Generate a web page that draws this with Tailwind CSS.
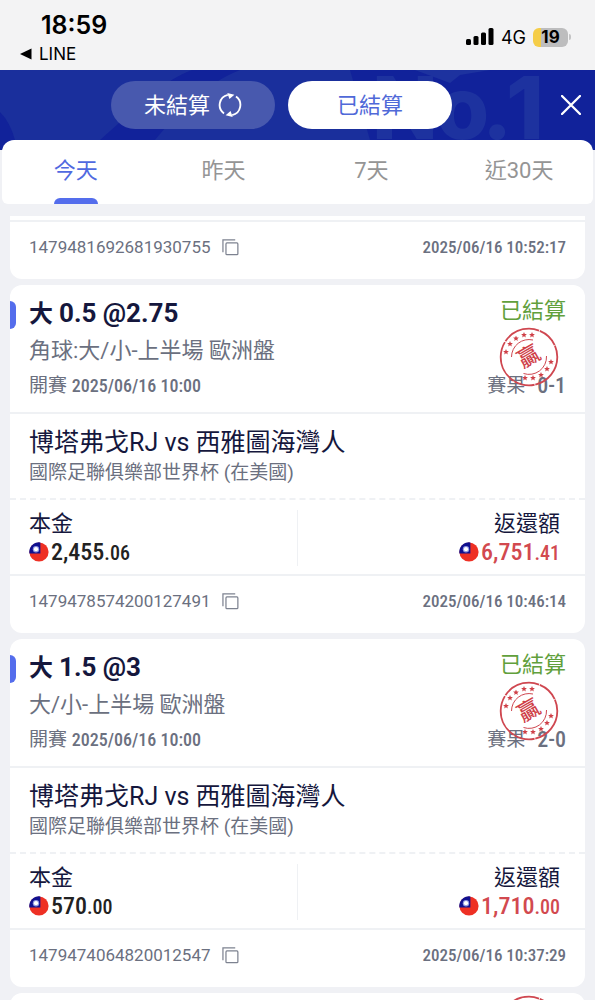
<!DOCTYPE html>
<html lang="zh-Hant">
<head>
  <meta charset="UTF-8" />
  <meta name="viewport" content="width=device-width, initial-scale=1.0" />
  <title>已結算</title>
  <script src="https://cdn.jsdelivr.net/npm/@tailwindcss/browser@4"></script>
</head>
<body class="bg-[#f0f1f5] text-[#6b7080] font-['Roboto','Noto_Sans_CJK_TC',sans-serif]">

  <!-- Iconos compartidos -->
  <svg class="hidden">
    <symbol id="copy" viewBox="0 0 18 18">
      <path d="M1 14V1h13" fill="none" stroke="currentColor" stroke-width="1.3" />
      <rect x="4.2" y="4.2" width="12.6" height="12.4" rx="1" fill="none" stroke="currentColor" stroke-width="1.3" />
    </symbol>
    <symbol id="flag" viewBox="0 0 20 20">
      <circle cx="10" cy="10" r="9.6" fill="#ee3024" />
      <path d="M.4 11.6A9.6 9.6 0 0 1 11.4.5V11.6z" fill="#10108f" />
      <circle cx="7" cy="7.2" r="3.2" fill="#8f95e0" />
      <circle cx="7" cy="7.2" r="2.1" fill="#fff" />
    </symbol>
    <symbol id="star" viewBox="-5 -5 10 10">
      <path d="M0-5 1.4-1.7 4.8-1.5 2.2.7 3 4 0 2.2-3 4-2.2.7-4.8-1.5-1.4-1.7z" fill="#cf4048" />
    </symbol>
    <symbol id="stamp" viewBox="0 0 60 60">
      <g fill="none" stroke="#cf4750">
        <circle cx="30" cy="30" r="28.3" stroke-width="1.8" stroke-dasharray="38 .8 21 .6 44 1" />
        <path d="M12.500 30A17.500 17.500 0 0 1 34 13" stroke-width="1" />
        <path d="M47.500 29A17.500 17.500 0 0 1 24.500 46.500" stroke-width="1" />
      </g>
      <use href="#star" x="4" y="22" width="6" height="6" />
      <use href="#star" x="8" y="14" width="6" height="6" />
      <use href="#star" x="14" y="8.500" width="6" height="6" />
      <use href="#star" x="22" y="5" width="6" height="6" />
      <use href="#star" x="30" y="5" width="6" height="6" />
      <use href="#star" x="49" y="32" width="6" height="6" />
      <use href="#star" x="45" y="39" width="6" height="6" />
      <use href="#star" x="39" y="45" width="6" height="6" />
      <use href="#star" x="31" y="48" width="6" height="6" />
      <use href="#star" x="23" y="48" width="6" height="6" />
      <text x="30" y="37" transform="rotate(-30 30 30)" text-anchor="middle" font-size="22" font-weight="500" fill="#cf4048">贏</text>
    </symbol>
  </svg>

  <div class="h-screen flex flex-col overflow-hidden">

    <!-- Barra de estado -->
    <div class="h-[70px] shrink-0 bg-[#f3f3f4] text-black flex justify-between pl-5 pr-6 font-['Inter',sans-serif]">
      <div class="pt-2">
        <p class="pl-[21px] text-[25px] leading-[34px] font-semibold">18:59</p>
        <a href="#" class="flex items-center gap-[7px] text-[17px] leading-6">
          <svg class="w-3 h-3" viewBox="0 0 12 12"><path d="M0 6 11.500 .5v11z" fill="#000" /></svg>
          LINE
        </a>
      </div>
      <div class="flex items-center h-[74px]">
        <svg class="w-7 h-[18px]" viewBox="0 0 28 18">
          <rect x="0" y="11" width="5" height="6" rx="1.500" />
          <rect x="7.500" y="8" width="5" height="9" rx="1.500" />
          <rect x="15" y="4.500" width="5" height="12.500" rx="1.500" />
          <rect x="22.500" y="0" width="5" height="17" rx="1.500" />
        </svg>
        <span class="ml-[7px] text-[18px]">4G</span>
        <span class="ml-[7px] w-[35px] h-[19px] rounded-md bg-linear-to-r from-[#f5cd48] from-22% to-[#bdbdbe] to-22% text-[17px] leading-[19px] font-bold text-center">19</span>
        <span class="ml-px w-[2px] h-[6px] rounded-r bg-[#c4c4c5]"></span>
      </div>
    </div>

    <!-- Cabecera -->
    <header class="relative h-[70px] shrink-0 bg-[#11229a] flex justify-center gap-[13px] pt-[11px] pr-8">
      <svg class="absolute inset-0 w-full h-[70px]" viewBox="0 0 595 70" preserveAspectRatio="xMaxYMin slice">
        <rect width="595" height="70" fill="#1a2f9c" />
        <path d="M350 0h245v70H370z" fill="#11229a" />
        <path d="M100 70C145 30 165 10 192 0H240C205 14 180 40 155 70z" fill="#11229a" />
        <path d="M0 42Q10 52 15 70H0z" fill="#11229a" />
        <path d="M415 0h75l-30 5-10 8z" fill="#1d329f" />
        <g font-family="Inter, sans-serif" font-weight="800" font-size="86" fill="#1d329f">
          <text x="372" y="69">N</text>
          <text x="436" y="69">o</text>
          <text x="482" y="69">.</text>
          <text x="506" y="69">1</text>
        </g>
      </svg>
      <button class="relative w-[164px] h-12 rounded-full bg-[#4859ae] text-white text-[22px] flex items-center justify-center gap-2">
        未結算
        <svg class="w-6 h-6" viewBox="0 0 22 22">
          <path d="M5.500 18.700A9.500 9.500 0 0 1 9 1.700M16.500 3.300A9.500 9.500 0 0 1 13 20.300" fill="none" stroke="#fff" stroke-width="1.700" />
          <path d="M8.500 0l6.500 1.500-4.500 4zM13.500 22l-6.500-1.500 4.500-4z" fill="#fff" />
        </svg>
      </button>
      <button class="relative w-[164px] h-12 rounded-full bg-white text-[#5069d8] text-[22px]">已結算</button>
      <button class="absolute right-[14px] top-[25px]" aria-label="關閉">
        <svg class="w-5 h-5" viewBox="0 0 20 20"><path d="M1 1l18 18M19 1L1 19" stroke="#fff" stroke-width="2.300" stroke-linecap="round" /></svg>
      </button>
    </header>

    <!-- Pestañas -->
    <div class="shrink-0 bg-linear-to-b from-[#12249b] from-15% to-[#f0f1f5] to-15%">
      <nav class="relative h-16 mx-[2px] rounded-t-xl rounded-b-md bg-white grid grid-cols-4 text-center text-[22px] leading-[62px] text-[#959595]">
        <a href="#" class="relative text-[#5069e0]">今天
          <span class="absolute bottom-0 inset-x-0 mx-auto w-11 h-[6px] rounded-t-md bg-[#546dec]"></span>
        </a>
        <a href="#">昨天</a>
        <a href="#">7天</a>
        <a href="#">近30天</a>
      </nav>
    </div>

    <!-- Lista de apuestas -->
    <main class="flex-1 min-h-0 overflow-hidden mt-3 mx-[10px] flex flex-col gap-[6px]">
      <article class="shrink-0 bg-white rounded-b-xl pt-1">
        <footer class="border-t-2 border-[#eff1f4] px-[19px] pb-[6px] flex justify-between leading-[51px]">
          <div class="flex items-center gap-[11px] text-[17px]">1479481692681930755
            <button aria-label="複製"><svg class="w-[17px] h-[17px] text-[#7d8290]"><use href="#copy" /></svg></button>
          </div>
          <time class="text-[17px] font-medium font-['Roboto_Condensed','Roboto']">2025/06/16 10:52:17</time>
        </footer>
      </article>

      <article class="shrink-0 bg-white rounded-xl">
        <div class="relative flex justify-between px-[19px] pt-3 pb-[11px]">
          <span class="absolute left-0 top-4 w-[6px] h-7 rounded-r-md bg-[#546dec]"></span>
          <div>
            <h2 class="text-[24px] leading-[34px] font-bold text-[#15173d]">大 <span class="text-[26px] leading-none">0.5 @2.75</span></h2>
            <p class="text-[22px] leading-10">角球:大/小-上半場 歐洲盤</p>
            <p class="text-[19px] leading-[30px]">開賽 <time class="text-[18px] leading-none font-medium font-['Roboto_Condensed','Roboto']">2025/06/16 10:00</time></p>
          </div>
          <div class="flex flex-col justify-between items-end">
            <p class="text-[22px] leading-7 text-[#61a03c]">已結算</p>
            <p class="text-[19px] leading-[30px] flex gap-3">賽果 <span class="text-[22px] font-medium font-['Roboto_Condensed','Roboto']">0-1</span></p>
          </div>
          <svg class="absolute right-[26px] top-[42px] w-[60px] h-[60px]"><use href="#stamp" /></svg>
        </div>
        <div class="border-t-2 border-[#eff1f4] px-[19px] py-3">
          <h3 class="text-[25px] leading-[34px] text-[#15173d]">博塔弗戈RJ vs 西雅圖海灣人</h3>
          <p class="text-[19px] leading-[26px]">國際足聯俱樂部世界杯 (在美國)</p>
        </div>
        <div class="border-t-2 border-dashed border-[#eff1f4] px-[19px] pt-[10px] pb-2 grid grid-cols-2 leading-7">
          <div class="border-r border-[#eff1f4]">
            <p class="text-[22px] text-[#15173d]">本金</p>
            <p class="flex items-center gap-[2px] text-[24px] font-medium font-['Roboto_Condensed','Roboto'] text-[#222]">
              <svg class="w-5 h-5"><use href="#flag" /></svg>
              <span>2,455<span class="text-[20px] leading-none">.06</span></span>
            </p>
          </div>
          <div class="flex flex-col items-end pr-[6px]">
            <p class="text-[22px] text-[#15173d]">返還額</p>
            <p class="flex items-center gap-[2px] text-[24px] font-medium font-['Roboto_Condensed','Roboto'] text-[#d2494f]">
              <svg class="w-5 h-5"><use href="#flag" /></svg>
              <span>6,751<span class="text-[20px] leading-none">.41</span></span>
            </p>
          </div>
        </div>
        <footer class="border-t-2 border-[#eff1f4] px-[19px] pb-[6px] flex justify-between leading-[51px]">
          <div class="flex items-center gap-[11px] text-[17px]">1479478574200127491
            <button aria-label="複製"><svg class="w-[17px] h-[17px] text-[#7d8290]"><use href="#copy" /></svg></button>
          </div>
          <time class="text-[17px] font-medium font-['Roboto_Condensed','Roboto']">2025/06/16 10:46:14</time>
        </footer>
      </article>

      <article class="shrink-0 bg-white rounded-xl">
        <div class="relative flex justify-between px-[19px] pt-3 pb-[11px]">
          <span class="absolute left-0 top-4 w-[6px] h-7 rounded-r-md bg-[#546dec]"></span>
          <div>
            <h2 class="text-[24px] leading-[34px] font-bold text-[#15173d]">大 <span class="text-[26px] leading-none">1.5 @3</span></h2>
            <p class="text-[22px] leading-10">大/小-上半場 歐洲盤</p>
            <p class="text-[19px] leading-[30px]">開賽 <time class="text-[18px] leading-none font-medium font-['Roboto_Condensed','Roboto']">2025/06/16 10:00</time></p>
          </div>
          <div class="flex flex-col justify-between items-end">
            <p class="text-[22px] leading-7 text-[#61a03c]">已結算</p>
            <p class="text-[19px] leading-[30px] flex gap-3">賽果 <span class="text-[22px] font-medium font-['Roboto_Condensed','Roboto']">2-0</span></p>
          </div>
          <svg class="absolute right-[26px] top-[42px] w-[60px] h-[60px]"><use href="#stamp" /></svg>
        </div>
        <div class="border-t-2 border-[#eff1f4] px-[19px] py-3">
          <h3 class="text-[25px] leading-[34px] text-[#15173d]">博塔弗戈RJ vs 西雅圖海灣人</h3>
          <p class="text-[19px] leading-[26px]">國際足聯俱樂部世界杯 (在美國)</p>
        </div>
        <div class="border-t-2 border-dashed border-[#eff1f4] px-[19px] pt-[10px] pb-2 grid grid-cols-2 leading-7">
          <div class="border-r border-[#eff1f4]">
            <p class="text-[22px] text-[#15173d]">本金</p>
            <p class="flex items-center gap-[2px] text-[24px] font-medium font-['Roboto_Condensed','Roboto'] text-[#222]">
              <svg class="w-5 h-5"><use href="#flag" /></svg>
              <span>570<span class="text-[20px] leading-none">.00</span></span>
            </p>
          </div>
          <div class="flex flex-col items-end pr-[6px]">
            <p class="text-[22px] text-[#15173d]">返還額</p>
            <p class="flex items-center gap-[2px] text-[24px] font-medium font-['Roboto_Condensed','Roboto'] text-[#d2494f]">
              <svg class="w-5 h-5"><use href="#flag" /></svg>
              <span>1,710<span class="text-[20px] leading-none">.00</span></span>
            </p>
          </div>
        </div>
        <footer class="border-t-2 border-[#eff1f4] px-[19px] pb-[6px] flex justify-between leading-[51px]">
          <div class="flex items-center gap-[11px] text-[17px]">1479474064820012547
            <button aria-label="複製"><svg class="w-[17px] h-[17px] text-[#7d8290]"><use href="#copy" /></svg></button>
          </div>
          <time class="text-[17px] font-medium font-['Roboto_Condensed','Roboto']">2025/06/16 10:37:29</time>
        </footer>
      </article>

      <article class="shrink-0 bg-white rounded-t-xl flex justify-end pr-[26px] pt-[2px]">
        <svg class="w-[60px] h-[60px]"><use href="#stamp" /></svg>
      </article>
    </main>
  </div>
</body>
</html>
